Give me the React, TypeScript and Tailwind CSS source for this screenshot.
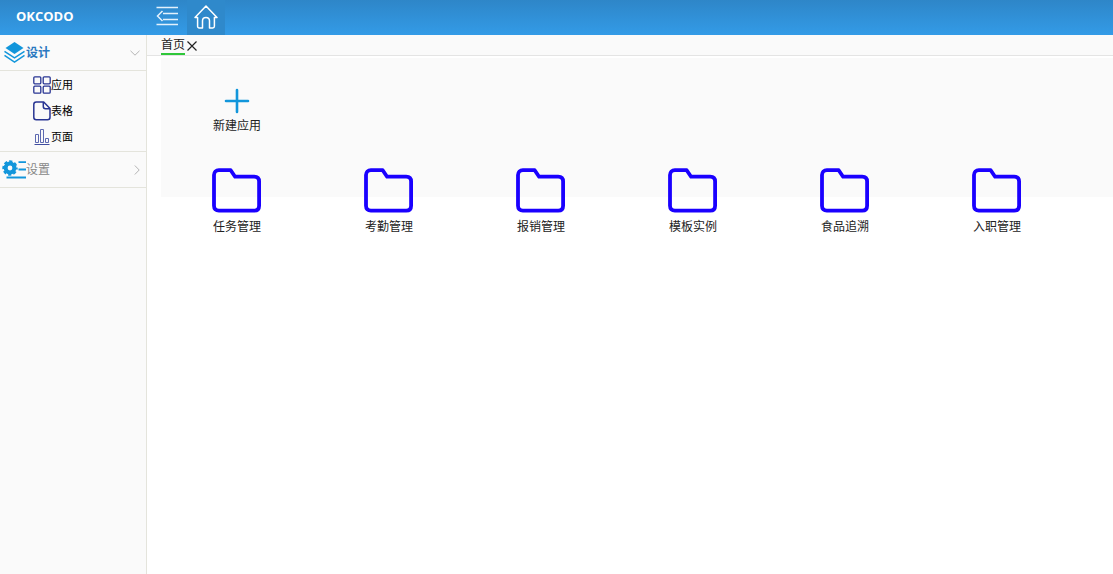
import type { ReactNode } from 'react';

const folders = ['任务管理', '考勤管理', '报销管理', '模板实例', '食品追溯', '入职管理'];

function CollapseIcon() {
  return (
    <svg width="22" height="20" viewBox="0 0 22 20" fill="none" stroke="#e3f1fc" strokeWidth="1.5">
      <path d="M.5 1.5H22M7 7.5h15M7 13.5h15M.5 18.5H22M6.500 5l-5 5 5 5" />
    </svg>
  );
}

function HomeIcon() {
  return (
    <svg width="24" height="24" viewBox="0 0 24 24" fill="none" stroke="#ffffff" strokeWidth="1.5" strokeLinejoin="round" strokeLinecap="round">
      <path d="M3.6 12.5H1L12 1l11 11.5h-2.600v8.700c0 1-.7 1.700-1.700 1.700h-3.200v-7.200c0-2-1.300-3.200-3.500-3.200s-3.500 1.200-3.500 3.200v7.200H5.300c-1 0-1.700-.7-1.700-1.700z" />
    </svg>
  );
}

function LayersIcon() {
  return (
    <svg width="22" height="22" viewBox="0 0 22 22" fill="none" stroke="#1296db" strokeWidth="1.5">
      <path d="M10.500 0L19.500 6l-9 6-9-6z" fill="#1296db" stroke="none" />
      <path d="M.5 9.300l10 6.500 10-6.500M.5 13.300l10 6.700 10-6.700" />
    </svg>
  );
}

function GearIcon() {
  return (
    <svg width="24" height="20" viewBox="0 0 24 20" fill="none" stroke="#1296db">
      <circle cx="8" cy="8" r="4.400" strokeWidth="4" />
      <circle cx="8" cy="8" r="6.300" strokeWidth="2.800" strokeDasharray="3 1.948" strokeDashoffset="1.500" />
      <path d="M16.500 2.200H24M16.500 9.500H24M4.500 17.500H24" strokeWidth="1.800" />
    </svg>
  );
}

function GridIcon() {
  return (
    <svg width="18" height="18" viewBox="0 0 18 18" fill="none" stroke="#283593" strokeWidth="1.3">
      <rect x=".8" y=".8" width="7" height="7" rx="1" />
      <rect x="10.2" y=".8" width="7" height="7" rx="1" />
      <rect x=".8" y="10.2" width="7" height="7" rx="1" />
      <rect x="10.2" y="10.2" width="7" height="7" rx="1" />
    </svg>
  );
}

function FileIcon() {
  return (
    <svg width="18" height="20" viewBox="0 0 18 20" fill="none" stroke="#283593" strokeWidth="1.5" strokeLinejoin="round">
      <path d="M3.300 1h7.400l6.300 6.500v8.800c0 1.500-1 2.500-2.500 2.500H3.300C1.800 18.800.8 17.800.8 16.300V3.500C.8 2 1.800 1 3.300 1z" />
      <path d="M10.300 1v4.500c0 1.400.8 2.200 2.200 2.200H17" />
    </svg>
  );
}

function ChartIcon() {
  return (
    <svg width="18" height="18" viewBox="0 0 18 18" fill="none" stroke="#5c68b0" strokeWidth="1">
      <path d="M2.500 14.500v-8h3v8zM7.500 14.500v-13h3v13zM12.500 14.500v-4h3v4z" />
      <path d="M1.500 16.500h15" stroke="#3f4c9f" />
    </svg>
  );
}

function Chevron({ open }: { open?: boolean }) {
  return (
    <svg width="10" height="10" viewBox="0 0 10 10" fill="none" stroke="#b5b5b5" className="shrink-0">
      <path d={open ? 'M.5 2.800L5 7.200l4.500-4.400' : 'M2.800.5L7.200 5 2.800 9.500'} />
    </svg>
  );
}

function PlusIcon() {
  return (
    <svg width="32" height="33" viewBox="0 0 32 33" fill="none" stroke="#1296db" strokeWidth="2.600" strokeLinecap="round">
      <path d="M16 5v22M5 16h22" />
    </svg>
  );
}

function FolderIcon() {
  return (
    <svg width="50" height="51" viewBox="0 0 50 51" fill="none" stroke="#1a00ff" strokeWidth="3.800" strokeLinejoin="round">
      <path d="M6.900 2.200h11.800l4.400 6.500h19.100c3.100 0 4.900 1.900 4.900 4.900v24.200c0 3.100-1.800 4.900-4.900 4.900H6.900c-3 0-4.900-1.800-4.900-4.900V7.100c0-3 1.900-4.900 4.900-4.900z" />
    </svg>
  );
}

const designItems = [
  { label: '应用', icon: GridIcon },
  { label: '表格', icon: FileIcon },
  { label: '页面', icon: ChartIcon },
];

function Tile({ label, children }: { label: string; children: ReactNode }) {
  return (
    <button type="button" className="flex w-[152px] cursor-pointer flex-col items-center text-xs text-[#222222]">
      {children}
      <span>{label}</span>
    </button>
  );
}

export default function App() {
  return (
    <div className="flex min-h-screen flex-col bg-white font-['Liberation_Sans','Noto_Sans_CJK_SC',sans-serif] text-xs text-[#222222]">
      <header className="flex h-[35px] bg-linear-to-b from-[#2e86c8] to-[#339be7]">
        <h1 className="w-[147px] pl-4 font-['Open_Sans',sans-serif] text-[13px] leading-8 font-bold text-white">OKCODO</h1>
        <button type="button" aria-label="收起菜单" className="flex h-8 w-10 cursor-pointer items-center justify-center">
          <CollapseIcon />
        </button>
        <button type="button" aria-label="首页" className="flex h-full w-[38px] cursor-pointer items-center justify-center bg-[#2f89cb] pb-0.5">
          <HomeIcon />
        </button>
      </header>

      <div className="flex flex-1">
        <nav className="w-[147px] shrink-0 border-r border-[#e4e4dc] bg-[#fafafa]">
          <button type="button" aria-expanded="true" className="flex h-9 w-full cursor-pointer items-center border-b border-[#e4e4dc] pr-1.5 pl-1 font-bold text-[#2a78c0]">
            <LayersIcon />
            <span className="flex-1 text-left">设计</span>
            <Chevron open />
          </button>
          <ul className="border-b border-[#e4e4dc] py-px text-[11px] text-black">
            {designItems.map(({ label, icon: Icon }) => (
              <li key={label}>
                <a href="#" className="flex h-[26px] items-center pl-[33px]">
                  <Icon />
                  {label}
                </a>
              </li>
            ))}
          </ul>
          <button type="button" aria-expanded="false" className="flex h-9 w-full cursor-pointer items-center border-b border-[#e4e4dc] pr-1 pl-0.5 text-[#888888]">
            <GearIcon />
            <span className="flex-1 text-left">设置</span>
            <Chevron />
          </button>
        </nav>

        <main className="min-w-0 flex-1">
          <div className="flex h-[21px] items-start border-b border-[#e4e4e4] bg-[#fafafa] pl-3.5">
            <a href="#" className="h-5 border-b-2 border-[#2fc73a] leading-5">首页</a>
            <button type="button" aria-label="关闭" className="flex h-[21px] cursor-pointer items-center pl-0.5">
              <svg width="10" height="10" viewBox="0 0 10 10" fill="none" stroke="#222222" strokeWidth="1.2">
                <path d="M.5.5l9 9M9.500.5l-9 9" />
              </svg>
            </button>
          </div>
          <div className="pt-0.5 pl-3.5">
            <section className="h-[139px] bg-[#fafafa] pt-[27px]">
              <Tile label="新建应用">
                <PlusIcon />
              </Tile>
              <div className="flex flex-wrap gap-y-[34px] pt-[34px]">
                {folders.map((name) => (
                  <Tile key={name} label={name}>
                    <FolderIcon />
                  </Tile>
                ))}
              </div>
            </section>
          </div>
        </main>
      </div>
    </div>
  );
}
